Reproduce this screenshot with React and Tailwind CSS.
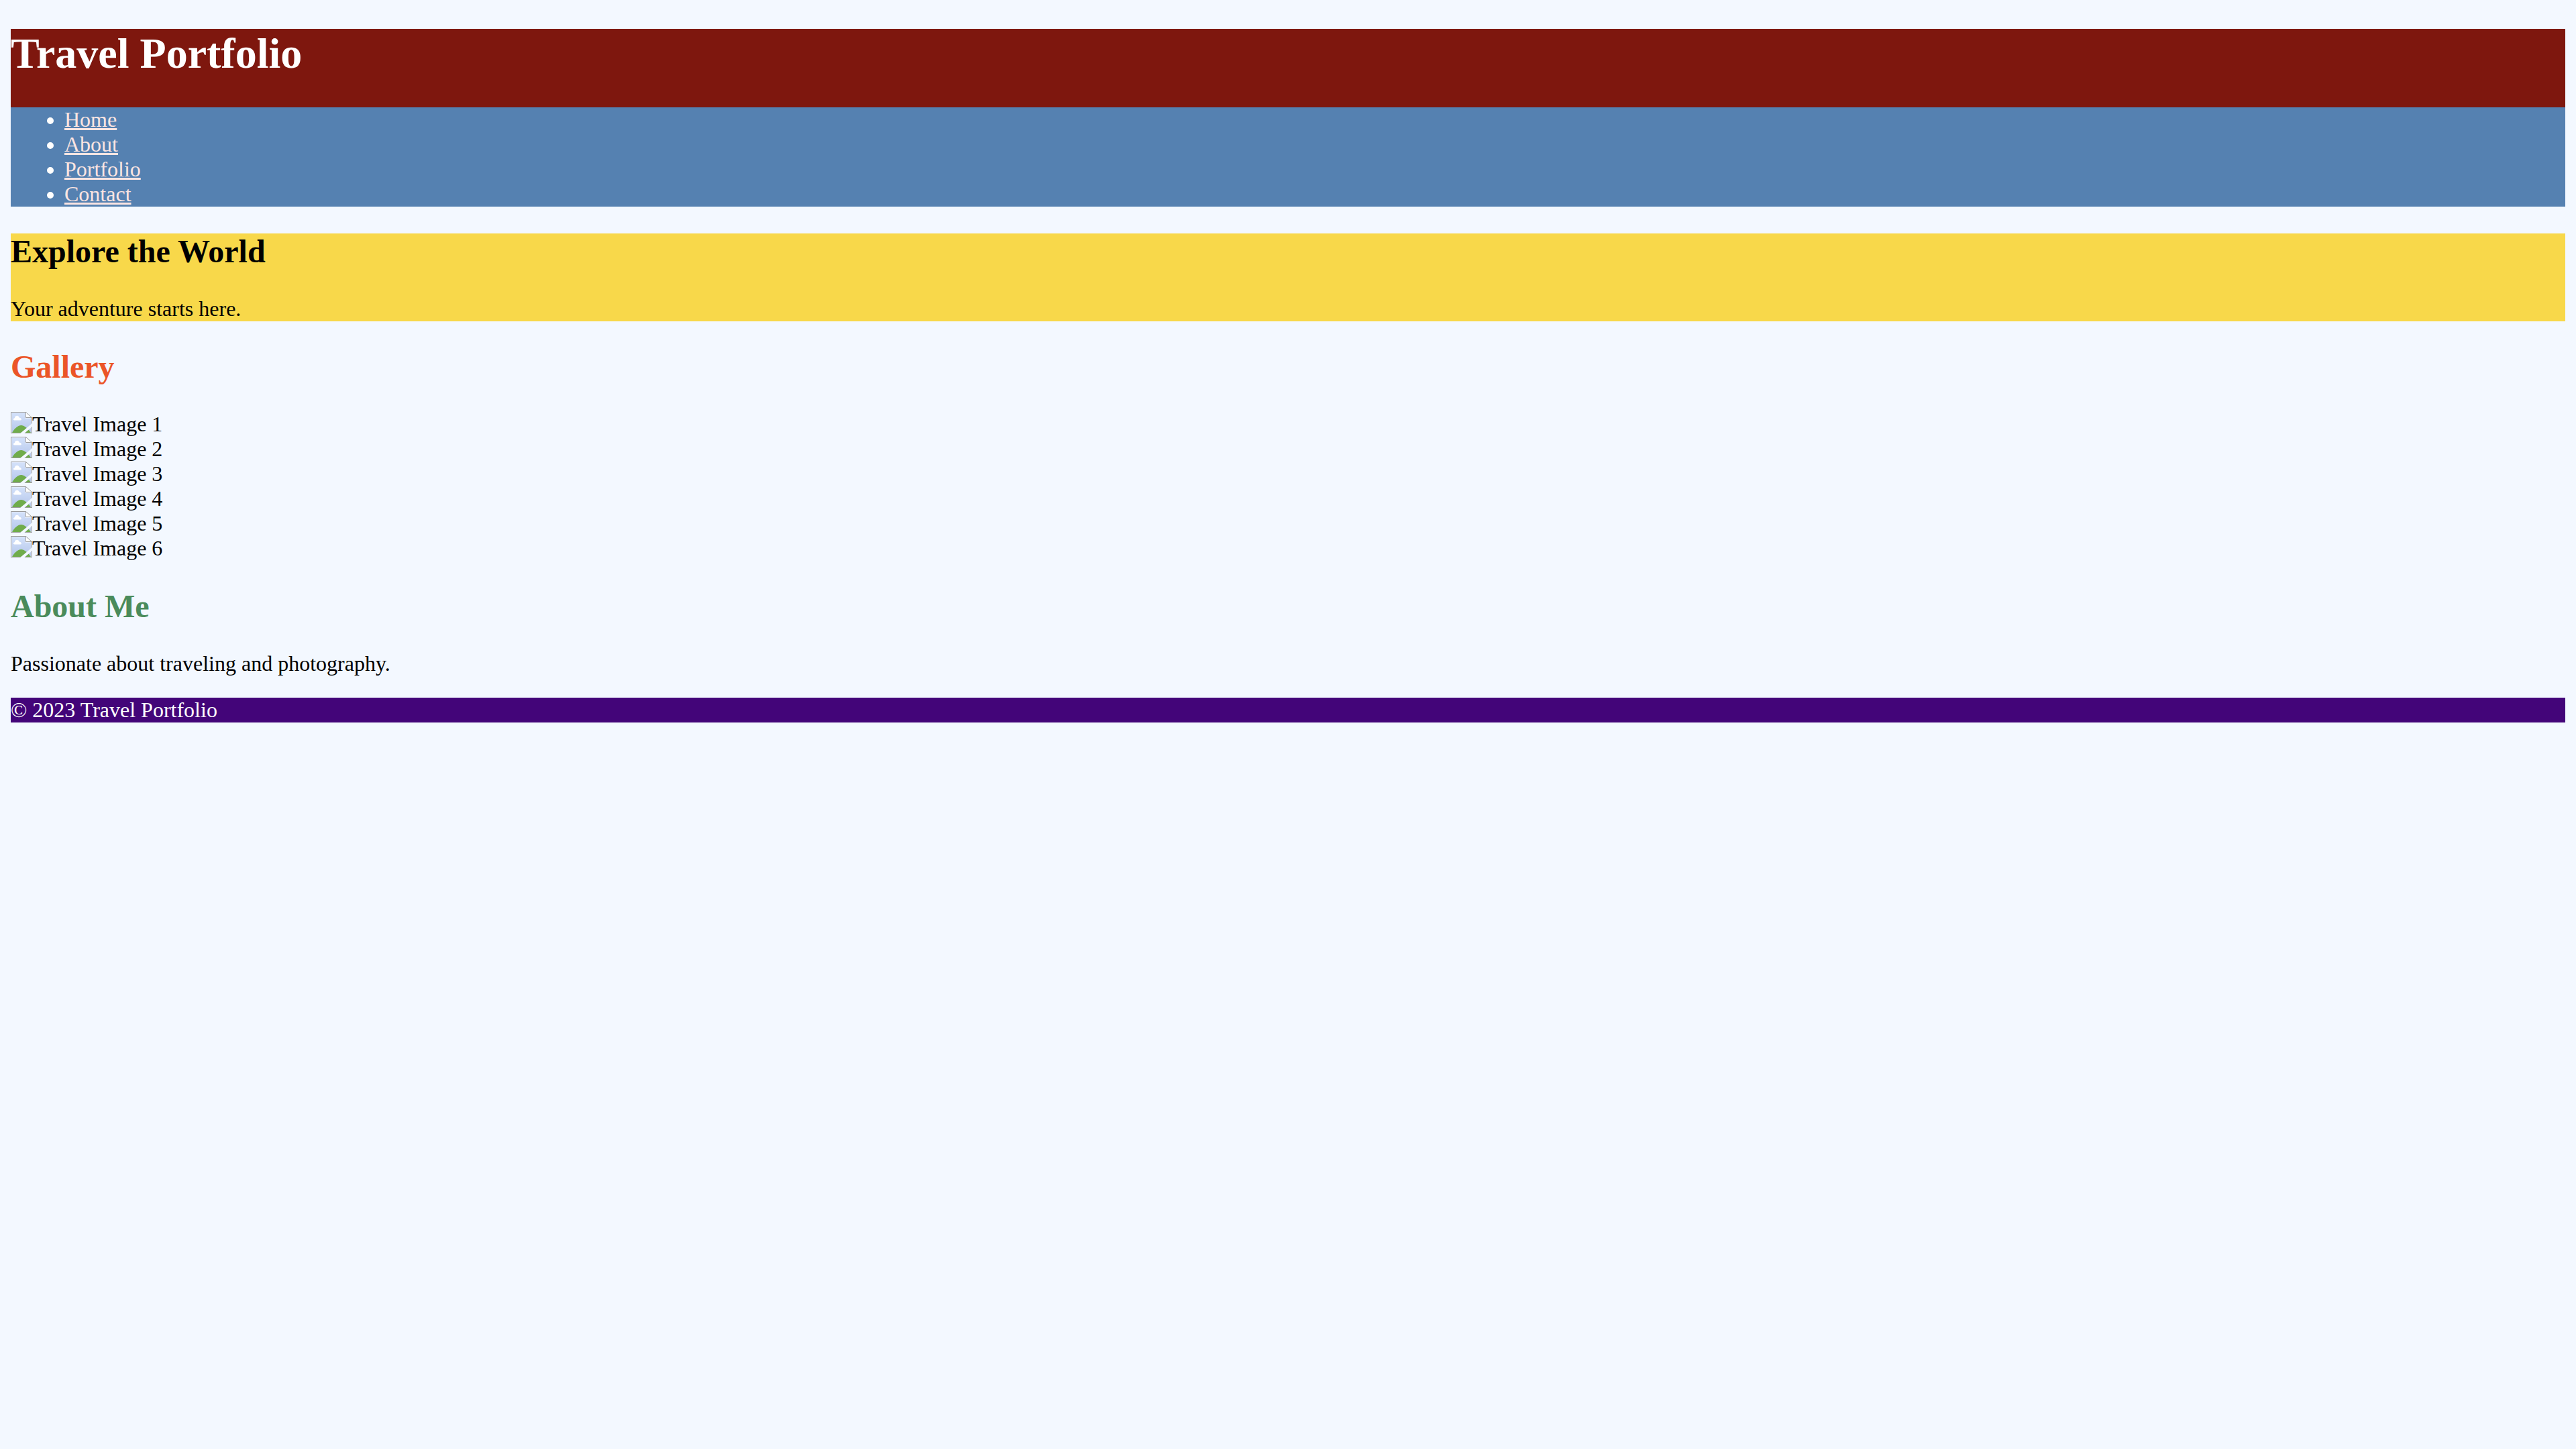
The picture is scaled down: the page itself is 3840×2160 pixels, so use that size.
const links = ["Home", "About", "Portfolio", "Contact"];
const images = [1, 2, 3, 4, 5, 6];

function PictureIcon({ id }) {
  return (
    <svg className="size-8 shrink-0" viewBox="0 0 32 32" aria-hidden="true">
      <defs>
        <linearGradient id={`sky-${id}`} x1="0" y1="0" x2="0" y2="1">
          <stop offset="0" stopColor="#d5e3fb" />
          <stop offset="1" stopColor="#b4c5ea" />
        </linearGradient>
        <clipPath id={`torn-${id}`}>
          <path d="M0 0H32V17L14 32H0ZM32 22V32H20.500Z" />
        </clipPath>
      </defs>
      <g clipPath={`url(#torn-${id})`}>
        <path d="M0 0H22.500L32 9V32H0Z" fill={`url(#sky-${id})`} />
        <path d="M1.500 1.500H21.500V9.500H30.500V30.500H1.500Z" fill="none" stroke="#e0e9fb" />
        <path d="M2 31C6 24 11 20 15.500 20S25 24 30 31Z" fill="#6fac4b" />
        <path d="M5.500 12.500C3.500 12.500 3.300 9.700 5.800 9.300C6.200 6.500 8 5.500 9.700 5.700C11.300 5.800 12.500 7 13 8.800C16 8.900 17 12.500 14.500 12.500Z" fill="#fff" />
        <path d="M22.500 0.500V8.500H31.500Z" fill="#fff" stroke="#9b9b9b" />
        <path d="M22.500 0.500H0.500V31.500H31.500V8.500" fill="none" stroke="#9b9b9b" />
      </g>
    </svg>
  );
}

export default function App() {
  return (
    <div className="min-h-screen bg-[#f3f8ff] px-4 pt-[43px] font-['Liberation_Serif',serif] text-[32px] leading-[37px] text-black">
      <header className="bg-[#7e170e] text-white">
        <h1 className="pb-[43px] text-[64px] leading-[74px] font-bold">Travel Portfolio</h1>
        <nav className="bg-[#5581b1]">
          <ul className="list-disc pl-20">
            {links.map((label) => (
              <li key={label}>
                <a href={`#${label.toLowerCase()}`} className="text-[#fbe5e2] underline">{label}</a>
              </li>
            ))}
          </ul>
        </nav>
      </header>
      <main>
        <section id="home" className="mt-10 bg-[#f8d84a]">
          <h2 className="mb-10 text-[48px] leading-[54px] font-bold">Explore the World</h2>
          <p>Your adventure starts here.</p>
        </section>
        <section id="portfolio" className="mt-10">
          <h2 className="mb-10 text-[48px] leading-[55px] font-bold text-[#eb5528]">Gallery</h2>
          {images.map((n) => (
            <div key={n} className="flex h-[37px] items-start">
              <PictureIcon id={n} />
              <span>Travel Image {n}</span>
            </div>
          ))}
        </section>
        <section id="about" className="mt-10">
          <h2 className="mb-10 text-[48px] leading-[55px] font-bold text-[#4a8b5b]">About Me</h2>
          <p>Passionate about traveling and photography.</p>
        </section>
      </main>
      <footer id="contact" className="mt-8 bg-[#430579] text-white">
        <p>© 2023 Travel Portfolio</p>
      </footer>
    </div>
  );
}
